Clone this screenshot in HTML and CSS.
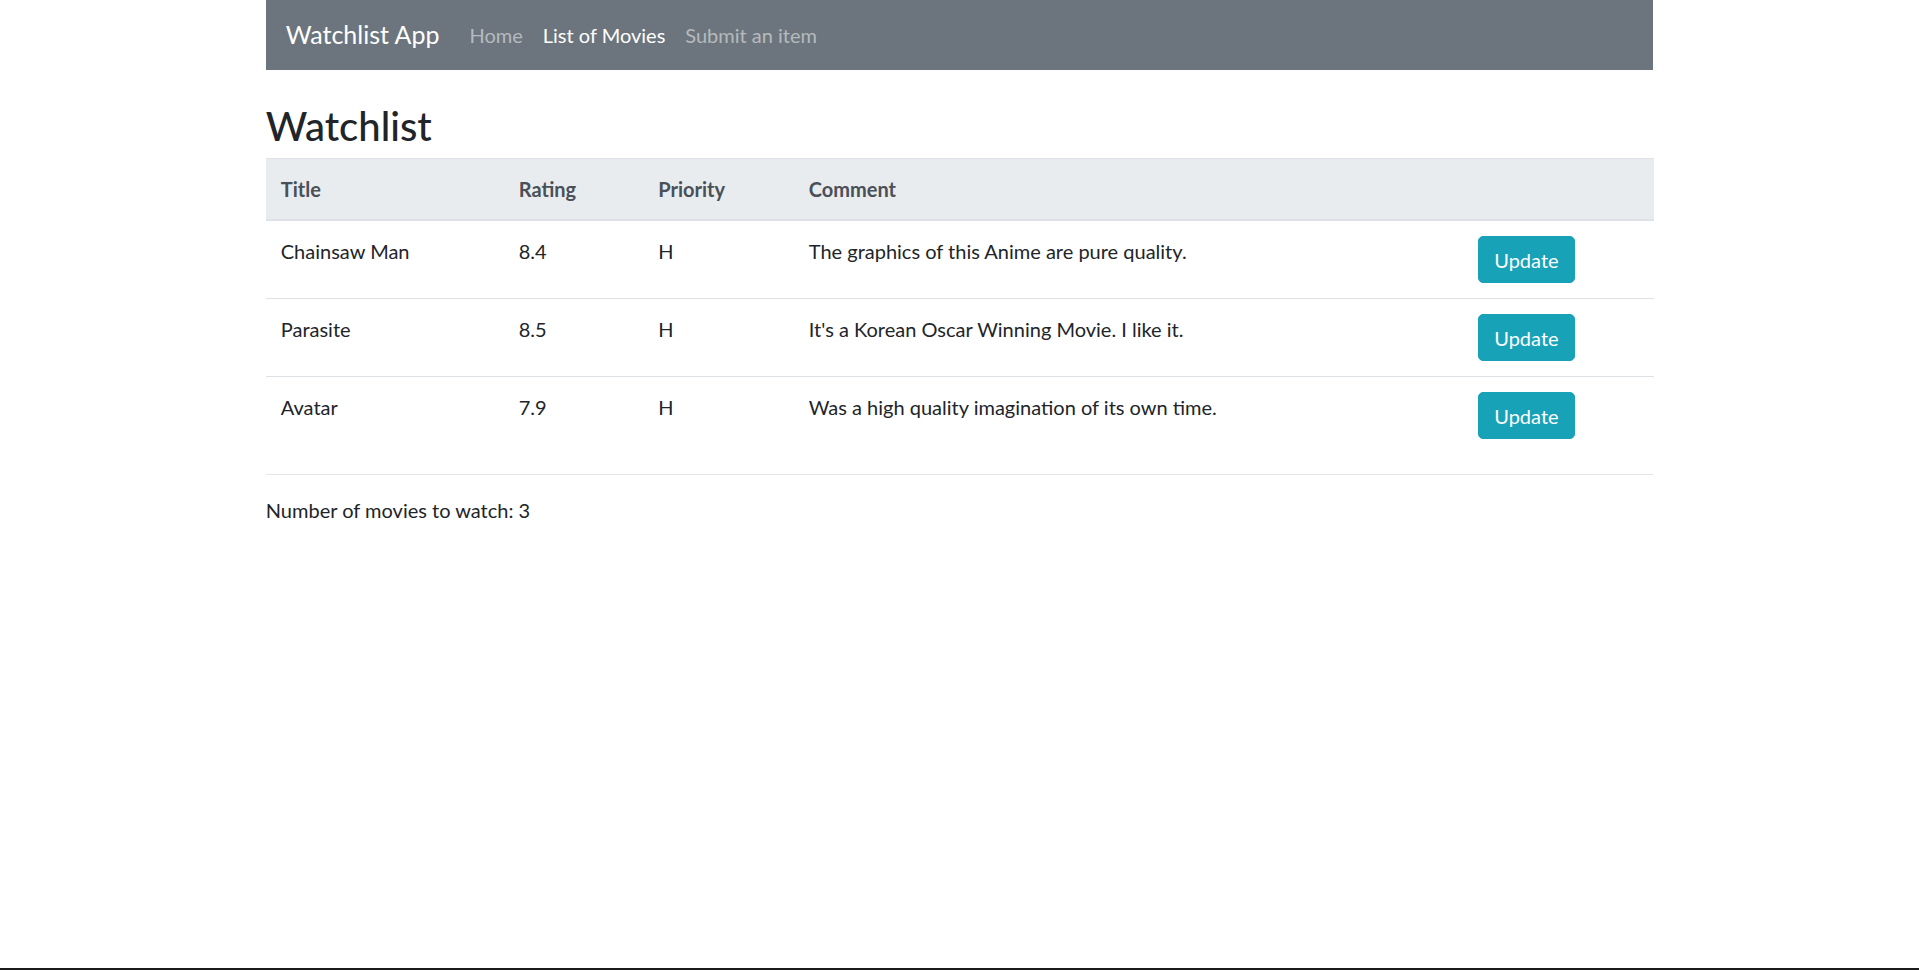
FILE: index.html
```html
<!DOCTYPE html>
<html lang="en">
<head>
<meta charset="utf-8">
<title>Watchlist App</title>
<link rel="stylesheet" href="styles.css">
</head>
<body>
<div class="container">
  <nav class="navbar">
    <a class="brand" href="#">Watchlist App</a>
    <ul class="nav">
      <li><a class="nav-link" href="#">Home</a></li>
      <li><a class="nav-link active" href="#">List of Movies</a></li>
      <li><a class="nav-link" href="#">Submit an item</a></li>
    </ul>
  </nav>

  <h2 class="page-title">Watchlist</h2>

  <table class="table">
    <thead>
      <tr>
        <th class="col-title">Title</th>
        <th class="col-rating">Rating</th>
        <th class="col-priority">Priority</th>
        <th class="col-comment">Comment</th>
        <th class="col-action"></th>
      </tr>
    </thead>
    <tbody>
      <tr>
        <td>Chainsaw Man</td>
        <td>8.4</td>
        <td>H</td>
        <td>The graphics of this Anime are pure quality.</td>
        <td><button class="btn" type="button">Update</button></td>
      </tr>
      <tr>
        <td>Parasite</td>
        <td>8.5</td>
        <td>H</td>
        <td>It's a Korean Oscar Winning Movie. I like it.</td>
        <td><button class="btn" type="button">Update</button></td>
      </tr>
      <tr>
        <td>Avatar</td>
        <td>7.9</td>
        <td>H</td>
        <td>Was a high quality imagination of its own time.</td>
        <td><button class="btn" type="button">Update</button></td>
      </tr>
    </tbody>
  </table>
  <hr class="divider">
  <p class="count">Number of movies to watch: 3</p>
</div>
</body>
</html>
```

FILE: styles.css
```css
html, body {
  margin: 0;
  padding: 0;
}
body {
  min-height: 100vh;
  box-sizing: border-box;
  border-bottom: 2px solid #1b1b1b;
  font-family: Lato, "Liberation Sans", sans-serif;
  font-size: 20px;
  line-height: 30px;
  color: #212529;
  background: #fff;
}
.container {
  width: 1425px;
  margin: 0 auto;
  padding: 0 18.75px;
  box-sizing: border-box;
}
.navbar {
  display: flex;
  align-items: center;
  background: #6c757d;
  padding: 10px 20px;
  height: 70px;
  box-sizing: border-box;
}
.brand {
  font-size: 25px;
  line-height: 37.5px;
  padding: 6.25px 0;
  margin-right: 20px;
  color: #fff;
  text-decoration: none;
  white-space: nowrap;
}
.nav {
  display: flex;
  list-style: none;
  margin: 0;
  padding: 0;
}
.nav-link {
  display: block;
  padding: 10px;
  color: rgba(255, 255, 255, 0.5);
  text-decoration: none;
  font-size: 20px;
  line-height: 30px;
}
.nav-link.active {
  color: #fff;
}
.page-title {
  margin: 31.5px 0 8.5px;
  font-size: 40px;
  line-height: 48px;
  font-weight: 500;
  color: #212529;
}
.table {
  width: 100%;
  border-collapse: collapse;
  table-layout: fixed;
  margin-bottom: 20px;
  color: #212529;
}
.table th,
.table td {
  padding: 15px;
  text-align: left;
  vertical-align: top;
  border-top: 1px solid #dee2e6;
}
.table thead th {
  vertical-align: bottom;
  background: #e9ecef;
  color: #495057;
  font-weight: 700;
  border-bottom: 2px solid #dee2e6;
}
.col-title { width: 208px; }
.col-rating { width: 109.5px; }
.col-priority { width: 120.5px; }
.col-comment { width: 639.5px; }
.col-action { width: 160.5px; }
.btn {
  display: inline-block;
  font-family: inherit;
  font-size: 20px;
  line-height: 30px;
  padding: 7.5px 15px;
  border: 1.25px solid #17a2b8;
  border-radius: 5px;
  background: #17a2b8;
  color: #fff;
  cursor: pointer;
}
.divider {
  margin: 20px 0;
  border: 0;
  border-top: 1px solid rgba(0, 0, 0, 0.1);
  height: 0;
}
.count {
  margin: 0 0 20px;
}
```
